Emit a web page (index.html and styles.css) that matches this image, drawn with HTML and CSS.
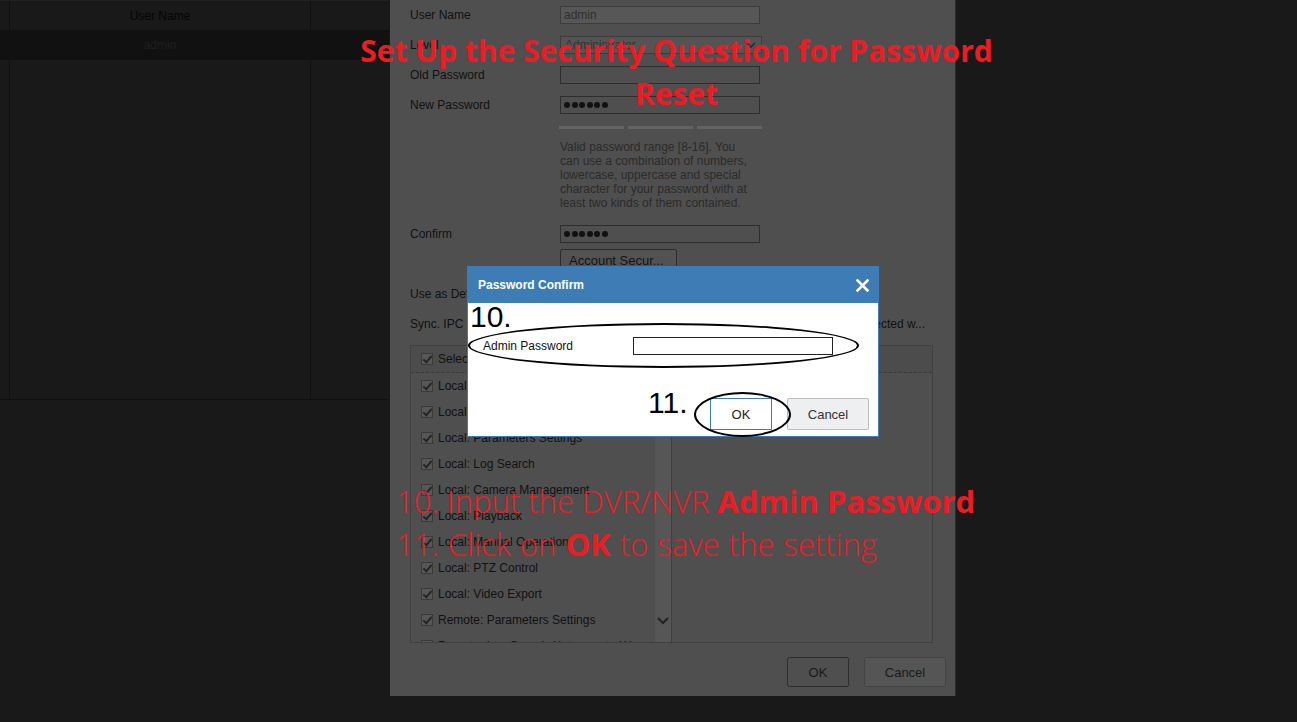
FILE: index.html
```html
<!DOCTYPE html>
<html lang="en">
<head>
    <meta charset="UTF-8">
    <meta name="viewport" content="width=device-width, initial-scale=1.0">
    <title>Password Confirm</title>
    <link rel="stylesheet" href="styles.css">
</head>
<body>
    <!-- user list behind the dialog -->
    <div class="user-table">
        <div class="cell"></div>
        <div class="cell head">User Name</div>
        <div class="cell last"></div>
        <div class="cell sel"></div>
        <div class="cell sel">admin</div>
        <div class="cell sel last"></div>
        <div class="cell"></div>
        <div class="cell"></div>
        <div class="cell last"></div>
    </div>

    <!-- edit user dialog (dimmed) -->
    <div class="settings">
        <div class="form-row">
            <label>User Name</label>
            <div class="field readonly">admin</div>
        </div>
        <div class="form-row">
            <label>Level</label>
            <div class="field select">
                <span>Administrator</span>
                <svg width="10" height="7" viewBox="0 0 10 7"><polyline points="1,1 5,5 9,1" fill="none" stroke="#2a2a2a" stroke-width="1.6"/></svg>
            </div>
        </div>
        <div class="form-row">
            <label>Old Password</label>
            <div class="field"></div>
        </div>
        <div class="form-row">
            <label>New Password</label>
            <div class="field"><span class="dots"><i></i><i></i><i></i><i></i><i></i><i></i></span></div>
        </div>
        <div class="strength"><span></span><span></span><span></span></div>
        <div class="hint">
            Valid password range [8-16]. You<br>
            can use a combination of numbers,<br>
            lowercase, uppercase and special<br>
            character for your password with at<br>
            least two kinds of them contained.
        </div>
        <div class="form-row confirm-row">
            <label>Confirm</label>
            <div class="field"><span class="dots"><i></i><i></i><i></i><i></i><i></i><i></i></span></div>
        </div>
        <button class="btn-account">Account Secur...</button>
        <div class="form-row use-row">
            <label>Use as Default Password</label>
        </div>
        <div class="form-row sync-row">
            <span>Sync. IPC Password</span>
            <span>password of IP cameras connected w...</span>
        </div>

        <div class="perm-box">
            <div class="pane-left">
                <div class="pane-head">
                    <span class="check"></span>Select All
                </div>
                <div class="pane-body">
                    <div class="perm-list">
                        <div class="perm-item"><span class="check"></span>Local: Live View</div>
                        <div class="perm-item"><span class="check"></span>Local: Recording</div>
                        <div class="perm-item"><span class="check"></span>Local: Parameters Settings</div>
                        <div class="perm-item"><span class="check"></span>Local: Log Search</div>
                        <div class="perm-item"><span class="check"></span>Local: Camera Management</div>
                        <div class="perm-item"><span class="check"></span>Local: Playback</div>
                        <div class="perm-item"><span class="check"></span>Local: Manual Operation</div>
                        <div class="perm-item"><span class="check"></span>Local: PTZ Control</div>
                        <div class="perm-item"><span class="check"></span>Local: Video Export</div>
                        <div class="perm-item"><span class="check"></span>Remote: Parameters Settings</div>
                        <div class="perm-item"><span class="check"></span>Remote: Log Search / Interrogate Wo...</div>
                    </div>
                    <div class="scrollbar">
                        <svg width="12" height="8" viewBox="0 0 12 8"><polyline points="1,1 6,6 11,1" fill="none" stroke="#222" stroke-width="2"/></svg>
                    </div>
                </div>
            </div>
            <div class="pane-right">
                <div class="pane-head"></div>
            </div>
        </div>

        <div class="dialog-footer">
            <button class="dlg-btn ok">OK</button>
            <button class="dlg-btn cancel">Cancel</button>
        </div>
    </div>

    <!-- password confirm popup -->
    <div class="pw-modal">
        <div class="pw-head">
            <span>Password Confirm</span>
            <svg width="13" height="13" viewBox="0 0 13 13"><path d="M1.5 1.5 L11.5 11.5 M11.5 1.5 L1.5 11.5" stroke="#fff" stroke-width="2.6" stroke-linecap="square"/></svg>
        </div>
        <div class="pw-body">
            <div class="pw-row">
                <label>Admin Password</label>
                <div class="pw-input"></div>
            </div>
            <div class="pw-actions">
                <button class="pw-btn ok">OK</button>
                <button class="pw-btn cancel">Cancel</button>
            </div>

            <div class="step-num num-10">10.</div>
            <div class="ring ring-input"></div>
            <div class="step-num num-11">11.</div>
            <div class="ring ring-ok"></div>
        </div>
    </div>

    <!-- tutorial captions -->
    <div class="anno-title">Set Up the Security Question for Password<br>Reset</div>
    <div class="anno-steps">
        <div>10. Input the DVR/NVR <b>Admin Password</b></div>
        <div class="step-two">11. Click on <b>OK</b> to save the setting</div>
    </div>
</body>
</html>
```

FILE: styles.css
```css
body {
    margin: 0;
    width: 1297px;
    height: 722px;
    overflow: hidden;
    position: relative;
    background: #191919;
    font-family: "Liberation Sans", Arial, sans-serif;
    font-size: 12px;
}
button {
    font-family: "Liberation Sans", Arial, sans-serif;
    cursor: pointer;
}

/* background user table */
.user-table {
    width: 389px;
    height: 400px;
    border-top: 1px solid #202020;
    border-bottom: 1px solid #101010;
    box-sizing: border-box;
    display: grid;
    grid-template-columns: 10px 301px 78px;
    grid-template-rows: 29px 30px 1fr;
}
.cell {
    border-right: 1px solid #101010;
    display: flex;
    align-items: center;
    justify-content: center;
    color: #1f1f1f;
}
.cell.last {
    border-right: none;
}
.cell.head {
    color: #050505;
}
.cell.sel {
    background: #111;
    border-right-color: #111;
}

/* dimmed settings dialog */
.settings {
    position: absolute;
    left: 390px;
    top: 0;
    width: 566px;
    height: 696px;
    box-sizing: border-box;
    padding: 0 9px 0 20px;
    background: #4f4f4f;
    border-right: 1px solid #2c2c2c;
    color: #111;
}
.form-row {
    display: flex;
    align-items: center;
    height: 30px;
}
.form-row label {
    width: 150px;
    flex: none;
    white-space: nowrap;
}
.field {
    width: 200px;
    height: 18px;
    box-sizing: border-box;
    border: 1px solid #2e2e2e;
    display: flex;
    align-items: center;
    padding-left: 3px;
}
.field.readonly {
    background: #575757;
    border-color: #3c3c3c;
    color: #2f2f2f;
}
.field.select {
    width: 202px;
    justify-content: space-between;
    padding: 0 5px 0 4px;
    background: #545454;
    border-color: #3c3c3c;
    color: #333;
}
.dots {
    display: flex;
    gap: 1.5px;
}
.dots i {
    width: 6px;
    height: 6px;
    border-radius: 50%;
    background: #111;
}
.strength {
    display: flex;
    gap: 4px;
    margin: 6px 0 0 149px;
}
.strength span {
    width: 65px;
    height: 3px;
    background: #636363;
}
.hint {
    margin: 11px 0 0 150px;
    line-height: 14px;
    color: #2b2b2b;
}
.confirm-row {
    margin-top: 9px;
}
.btn-account {
    display: block;
    margin-left: 150px;
    width: 117px;
    height: 22px;
    padding: 0 0 0 8px;
    text-align: left;
    font-size: 13px;
    color: #141414;
    background: #525252;
    border: 1px solid #2c2c2c;
    border-radius: 2px;
}
.use-row {
    margin-top: 8px;
}
.sync-row {
    width: 515px;
    justify-content: space-between;
    white-space: nowrap;
}

/* permission list */
.perm-box {
    margin-top: 6px;
    width: 523px;
    height: 298px;
    box-sizing: border-box;
    border: 1px solid #404040;
    display: flex;
}
.pane-left {
    width: 261px;
    flex: none;
    border-right: 1px solid #404040;
    box-sizing: border-box;
    display: flex;
    flex-direction: column;
    overflow: hidden;
}
.pane-right {
    flex: 1;
}
.pane-head {
    height: 26px;
    flex: none;
    border-bottom: 1px dashed #3a3a3a;
    background: #4c4c4c;
    display: flex;
    align-items: center;
    gap: 5px;
    padding-left: 10px;
}
.pane-body {
    flex: 1;
    display: flex;
    overflow: hidden;
}
.perm-list {
    flex: 1;
    overflow: hidden;
}
.perm-item {
    height: 26px;
    display: flex;
    align-items: center;
    gap: 5px;
    padding-left: 10px;
    white-space: nowrap;
}
.check {
    width: 12px;
    height: 12px;
    box-sizing: border-box;
    flex: none;
    border: 1px solid #3a3a3a;
    background: #575757;
    position: relative;
}
.check::after {
    content: "";
    position: absolute;
    left: 3px;
    top: 0;
    width: 3px;
    height: 7px;
    border: solid #262626;
    border-width: 0 2px 2px 0;
    transform: rotate(40deg);
}
.scrollbar {
    width: 16px;
    flex: none;
    background: #565656;
    display: flex;
    align-items: flex-end;
    justify-content: center;
    padding-bottom: 17px;
    box-sizing: border-box;
}
.dialog-footer {
    margin-top: 14px;
    display: flex;
    justify-content: flex-end;
    gap: 15px;
}
.dlg-btn {
    height: 30px;
    font-size: 13px;
    color: #1a1a1a;
    border-radius: 2px;
}
.dlg-btn.ok {
    width: 62px;
    background: #4f4f4f;
    border: 1px solid #2e2e2e;
}
.dlg-btn.cancel {
    width: 82px;
    background: #555;
    border: 1px solid #444;
}

/* password confirm popup */
.pw-modal {
    position: absolute;
    left: 467px;
    top: 266px;
    width: 412px;
}
.pw-head {
    height: 37px;
    background: #3e7cb5;
    color: #fff;
    font-weight: bold;
    display: flex;
    align-items: center;
    justify-content: space-between;
    padding: 1px 10px 0 11px;
    box-sizing: border-box;
}
.pw-body {
    position: relative;
    height: 134px;
    box-sizing: border-box;
    background: #fff;
    border: 1px solid #3e7cb5;
    border-top: none;
    padding: 34px 9px 0 15px;
    color: #111;
}
.pw-row {
    display: flex;
    align-items: center;
    height: 18px;
}
.pw-row label {
    width: 150px;
    flex: none;
}
.pw-input {
    width: 200px;
    height: 18px;
    box-sizing: border-box;
    border: 1px solid #222;
}
.pw-actions {
    margin-top: 43px;
    display: flex;
    justify-content: flex-end;
    gap: 15px;
}
.pw-btn {
    height: 32px;
    font-size: 13px;
    color: #222;
}
.pw-btn.ok {
    width: 62px;
    background: #fff;
    border: 1px solid #3e7cb5;
}
.pw-btn.cancel {
    width: 82px;
    background: #eeeff1;
    border: 1px solid #bdbdbd;
    border-radius: 2px;
    color: #333;
}

/* annotation marks */
.step-num {
    position: absolute;
    font-size: 30px;
    line-height: 30px;
    color: #000;
}
.num-10 {
    left: 2px;
    top: -1px;
}
.num-11 {
    left: 180px;
    top: 85px;
}
.ring {
    position: absolute;
    border: 2px solid #000;
    border-radius: 50%;
    box-sizing: border-box;
}
.ring-input {
    left: 0;
    top: 20px;
    width: 391px;
    height: 45px;
}
.ring-ok {
    left: 226px;
    top: 89px;
    width: 97px;
    height: 45px;
}

/* red tutorial captions */
.anno-title {
    position: absolute;
    left: 350px;
    top: 29px;
    width: 653px;
    text-align: center;
    font-family: "Open Sans", sans-serif;
    font-weight: 700;
    font-size: 30px;
    line-height: 43px;
    color: #ec1c24;
    white-space: nowrap;
}
.anno-steps {
    position: absolute;
    left: 396px;
    top: 480px;
    font-family: "Open Sans", sans-serif;
    font-weight: 300;
    font-size: 31px;
    line-height: 43px;
    color: #ec1c24;
    white-space: nowrap;
}
.anno-steps b {
    font-weight: 700;
}
.step-two {
    word-spacing: 1px;
}
```
